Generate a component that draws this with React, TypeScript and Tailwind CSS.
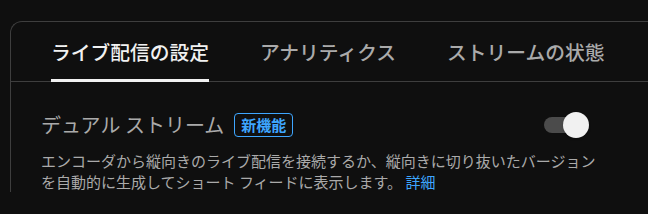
import React from 'react';

const FONT = { fontFamily: '"Noto Sans CJK JP", "Noto Sans", Roboto, sans-serif' };

const tabs = [
  { label: 'ライブ配信の設定', active: true },
  { label: 'アナリティクス', active: false },
  { label: 'ストリームの状態', active: false },
];

function Toggle() {
  return (
    <div className="relative h-[26px] w-[45px] shrink-0">
      <div className="absolute left-0 top-[5px] h-[16px] w-[36px] rounded-full bg-[#4b4b4b]" />
      <div className="absolute right-0 top-0 h-[26px] w-[26px] rounded-full bg-[#f1f1f1] shadow" />
    </div>
  );
}

export default function App() {
  return (
    <div className="h-[214px] w-[648px] overflow-hidden bg-[#0f0f0f]" style={FONT}>
      <div className="ml-[10px] mt-[21px] w-[700px] rounded-tl-xl border-l border-t border-[#3e3e3e]">
        {/* Tabs */}
        <div className="flex gap-[51px] border-b border-[#3e3e3e] pl-[40px]">
          {tabs.map((t) => (
            <div
              key={t.label}
              className={`relative flex h-[59px] items-center text-[19.75px] font-medium ${
                t.active ? 'text-[#f1f1f1]' : 'text-[#aaaaaa]'
              }`}
            >
              {t.label}
              {t.active && <div className="absolute -bottom-px left-0 right-0 h-[3px] bg-[#f1f1f1]" />}
            </div>
          ))}
        </div>

        {/* Dual stream */}
        <div className="pl-[30px] pt-[30px]">
          <div className="flex w-[548px] items-center justify-between">
            <div className="flex items-center gap-[10px]">
              <span className="text-[20px] leading-[26px] text-[#aaaaaa]">デュアル ストリーム</span>
              <span className="flex h-[24px] items-center rounded-[4px] border border-[#3ea6ff] px-[6px] text-[15px] font-bold text-[#3ea6ff]">
                新機能
              </span>
            </div>
            <Toggle />
          </div>
          <p className="mt-[12px] w-[560px] text-[15px] leading-[21px] text-[#aaaaaa]">
            エンコーダから縦向きのライブ配信を接続するか、縦向きに切り抜いたバージョンを自動的に生成してショート フィードに表示します。{' '}
            <a className="text-[#3ea6ff]">詳細</a>
          </p>
        </div>
      </div>
    </div>
  );
}
